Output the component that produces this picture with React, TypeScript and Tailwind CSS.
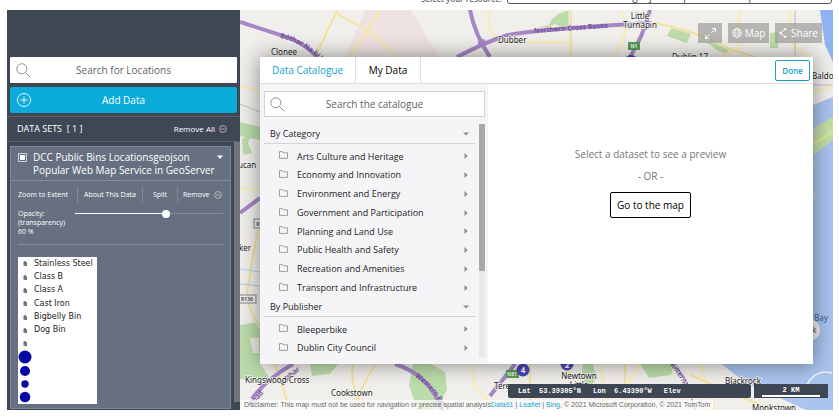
import React from "react";

const categories = [
  "Arts Culture and Heritage",
  "Economy and Innovation",
  "Environment and Energy",
  "Government and Participation",
  "Planning and Land Use",
  "Public Health and Safety",
  "Recreation and Amenities",
  "Transport and Infrastructure",
];
const publishers = ["Bleeperbike", "Dublin City Council"];
const binTypes = ["Stainless Steel", "Class B", "Class A", "Cast Iron", "Bigbelly Bin", "Dog Bin", ""];
const dotRadii = [6.5, 5, 3.7, 5.3];

function SearchIcon() {
  return (
    <svg viewBox="0 0 14 14" className="pointer-events-none absolute left-[6px] top-[6px] size-[15px]" fill="none" stroke="#8b8b8b" strokeWidth="0.9" aria-hidden="true">
      <circle cx="5.4" cy="5.4" r="4.7" />
      <path d="M8.9 8.9 L13.4 13.4" />
    </svg>
  );
}

function MinusCircle() {
  return (
    <svg viewBox="0 0 8 8" className="size-2" fill="none" stroke="#c3c7ce" strokeWidth="0.8" aria-hidden="true">
      <circle cx="4" cy="4" r="3.4" />
      <path d="M2 4 H6" />
    </svg>
  );
}

function SearchBox({ label, bordered }: { label: string; bordered?: boolean }) {
  return (
    <div className="relative">
      <SearchIcon />
      <input
        type="text"
        aria-label={label}
        placeholder={label}
        className={
          "block h-[26px] w-full bg-white px-8 text-center text-[10px] placeholder:text-[#5f5f5f] outline-none " +
          (bordered ? "border border-[#d3d3d6]" : "rounded-[1px]")
        }
      />
    </div>
  );
}

function Header() {
  return (
    <header className="flex h-[10px] items-end justify-end overflow-hidden pr-[7px] pb-[6px]">
      <label htmlFor="resource" className="mr-[5px] text-[8px] leading-[10px] font-semibold text-[#666]">
        Select your resource:
      </label>
      <select
        id="resource"
        className="h-4 w-[325px] shrink-0 appearance-none rounded-[3px] border border-[#555] bg-white px-1 text-[10px] text-[#444] outline-none"
      >
        <option>DCC Public Bins Locationsgeojson Popular Web Map</option>
      </select>
    </header>
  );
}

function BinIcon() {
  return (
    <svg viewBox="0 0 14 13" className="h-[13px] w-[14px]" aria-hidden="true">
      <path d="M5.2 5.4 L6.4 4.2 H8 V5.4 H9 V9 H5.6 V6.4 Z" fill="#666" />
      <path d="M6.6 6.6 V8.6 M7.8 6.6 V8.6" stroke="#aaa" strokeWidth="0.5" />
    </svg>
  );
}

function Legend() {
  return (
    <ul className="mt-3 mb-1 grid h-[147px] w-[79px] auto-rows-fr overflow-hidden bg-white font-['DejaVu_Sans'] text-[8px] whitespace-nowrap text-[#222]">
      {binTypes.map((name, i) => (
        <li key={i} className="flex items-center gap-[2px]">
          <BinIcon />
          <span>{name}</span>
        </li>
      ))}
      {dotRadii.map((r, i) => (
        <li key={i} className="flex items-center">
          <svg viewBox="0 0 14 14" className="size-[14px] shrink-0" aria-hidden="true">
            <circle cx="7" cy="7" r={r} fill="#0707a3" />
          </svg>
        </li>
      ))}
    </ul>
  );
}

function Sidebar() {
  return (
    <aside className="flex w-[233px] shrink-0 flex-col bg-[#3f4755] text-white">
      <div className="flex flex-col gap-1 px-[3px] pt-[47px] pb-[3px]">
        <SearchBox label="Search for Locations" />
        <button type="button" className="relative h-[26px] w-full rounded-[2px] bg-[#0aabd9] text-[10px] font-medium">
          <svg viewBox="0 0 14 14" className="absolute left-[7px] top-[6px] size-[14px]" fill="none" stroke="white" strokeWidth="0.9" aria-hidden="true">
            <circle cx="7" cy="7" r="6.5" />
            <path d="M7 3.6 V10.4 M3.6 7 H10.4" />
          </svg>
          Add Data
        </button>
      </div>
      <div className="flex h-[26px] items-center justify-between border-y border-t-[#596170] border-b-[#596170] pr-[13px] pl-[10px]">
        <h2 className="text-[9px] font-medium whitespace-pre">DATA SETS  [ 1 ]</h2>
        <button type="button" className="flex items-center gap-1 text-[8px] font-medium">
          Remove All <MinusCircle />
        </button>
      </div>
      <div className="flex grow">
        <div className="flex grow px-[3px] pt-1 pb-px">
          <article className="grow border border-[#7d8697] bg-[#677080]">
            <div className="flex h-[34px] items-start border-b border-[#858e9d] pt-1 pr-[7px] pl-[7px]">
              <input
                id="layer"
                type="checkbox"
                defaultChecked
                className="mt-[2px] mr-[6px] size-[9px] shrink-0 appearance-none border border-[#cfd3d9] bg-white outline-1 -outline-offset-2 outline-[#677080]"
              />
              <label htmlFor="layer" className="grow text-[10px] leading-[13px]">
                DCC Public Bins Locationsgeojson
                <br />
                Popular Web Map Service in GeoServer
              </label>
              <svg viewBox="0 0 6 4" className="mt-1 h-1 w-[6px] shrink-0" aria-hidden="true">
                <path d="M0 0.5 H6 L3 4 Z" fill="white" />
              </svg>
            </div>
            <div className="px-[7px]">
              <div className="mt-[6px] flex h-4 items-center text-[7px] font-medium whitespace-nowrap">
                <button type="button" className="h-full w-[60px] border-r border-[#828b9a] text-left">Zoom to Extent</button>
                <button type="button" className="h-full w-[65px] border-r border-[#828b9a]">About This Data</button>
                <button type="button" className="h-full w-[35px] border-r border-[#828b9a]">Split</button>
                <button type="button" className="flex h-full items-center gap-[5px] pl-[5px]">
                  Remove <MinusCircle />
                </button>
              </div>
              <div className="mt-[6px] flex items-start justify-between border-b border-[#858e9d] pb-2">
                <label htmlFor="opacity" className="text-[7px] leading-[9px] font-medium">
                  Opacity:
                  <br />
                  (transparency)
                  <br />
                  60 %
                </label>
                <input
                  id="opacity"
                  type="range"
                  defaultValue={62}
                  className="mt-[4px] h-px w-[148px] appearance-none bg-linear-to-r from-white from-60% to-[#858e9d] to-60% outline-none [&::-webkit-slider-thumb]:size-2 [&::-webkit-slider-thumb]:appearance-none [&::-webkit-slider-thumb]:rounded-full [&::-webkit-slider-thumb]:bg-white"
                />
              </div>
              <Legend />
            </div>
          </article>
        </div>
        <div className="mb-2 w-[6px] shrink-0 bg-[#737478]" />
      </div>
    </aside>
  );
}

function MapCanvas() {
  return (
    <svg viewBox="240 10 593 400" preserveAspectRatio="xMinYMin slice" className="absolute inset-0 size-full font-['Noto_Sans']" fill="none" role="img" aria-label="Map of Dublin">
      <rect x="240" y="10" width="593" height="400" fill="#f1efeb" />
      <path d="M365 10 H410 L440 57 H345 Z" fill="#efe3e2" />
      <g fill="#bcdcab">
        <path d="M539 27 l10-2 3-6 8-6 9-3 v16 l-8 1 -6-3 -9 4 z" />
        <path d="M672 27 l19 6 -4 10 -20-7z M706 42 l18 3 8 10 -14-4z M770 33 l8-1 v16 h-8z" />
        <path d="M242 139 l9-5 -3 9 4 10 -9 2z M240 122 l20 5 v13 l-20-4z" />
        <path d="M240 325 l20-3 v42 l14 20 -34-5z M310 364 h28 l-8 10 -18 2z M413 364 h18 l14 8 2 18 -12 20 h-18l-8-25z" />
        <path d="M583 364 h10 l3 15 -6 8 h-10z M640 364 h34 l-3 11 -22 3z" />
      </g>
      <path d="M250 338 h9 v15 h-6z" fill="#eef0e8" />
      <path d="M820 10 H833 V62 L825 45 Z" fill="#8fb3f0" />
      <path d="M813 105 L833 97 V410 H806 Q785 400 760 389 Q742 382 722 364 H813 Z" fill="#a9c4ef" />
      <path d="M813 128 L833 117 V140 L813 155 Z" fill="#c3dfa6" />
      <path d="M813 144 L833 132" stroke="#d8e69c" strokeWidth="3" />
      <path d="M806 386 q10-18 26-13" stroke="#edf0f5" strokeWidth="1.5" />
      <g stroke="#f7edc3" strokeWidth="3">
        <path d="M337 11 L315 57 M337 14 L369 31 L397 56 M381 10 L350 57 M489 10 V30 L502 42 H568 M570 10 V57" />
        <path d="M622 12 q10 24-10 45 M655 23 q45 9 75 26 l40 13 M742 10 q-8 18-3 39 l-20 8 M790 10 l-2 30 20 17" />
        <path d="M258 230 q-6 30-10 57 q-5 15 15 45 l12 32 15 46 M240 86 l20 6 M240 189 h20 M813 92 l20-5" />
        <path d="M353 364 q-5 20 12 46 M375 364 l-25 46 M476 364 q-12 20 22 46 M530 364 v46 M568 364 l5 46 M600 364 l8 46 M625 364 v46 M700 364 l15 46 M690 375 l75 32 M640 364 l-15 25" />
      </g>
      <g stroke="#e9d48b" strokeWidth="0.8">
        <path d="M337 11 L315 57 M337 14 L369 31 L397 56 M381 10 L350 57 M571 10 V57 M655 23 q45 9 75 26 l40 13" />
        <path d="M258 230 q-6 30-10 57 q-5 15 15 45 l12 32 15 46 M353 364 q-5 20 12 46 M375 364 l-25 46 M530 364 v46 M625 364 v46 M690 375 l75 32" />
      </g>
      <path d="M240 269 l20 3 M240 284 l20 2" stroke="#a5c5ea" strokeWidth="0.8" />
      <path d="M240 104 l20 8 M795 10 v47 M813 85 h20" stroke="#aaa" strokeWidth="0.7" />
      <g stroke="#a587c5" strokeWidth="4">
        <path d="M240 22 L290 38 Q306 45 317 57 M470 10 Q475 35 490 57 M457 57 Q490 40 508 35 Q540 29 650 23 M650 10 Q643 37 630 57" />
        <path d="M240 213 L260 198 M293 364 Q265 380 252 399 M395 364 Q430 375 442 410 M515 364 L490 396" />
      </g>
      <circle cx="482" cy="43" r="4" fill="#a587c5" />
      <path d="M671 364 q12 8 17 21 l7 25" stroke="#8c789b" strokeWidth="1.5" strokeDasharray="2 1" />
      <defs>
        <path id="bothar" d="M280 38 Q303 42 324 64" />
        <path id="bothar2" d="M283 386 Q295 372 310 364" />
        <path id="western" d="M415 377 Q432 388 443 408" />
        <path id="kilt" d="M670 365 Q682 378 690 400" />
      </defs>
      <g fontSize="7" fill="#714b99" fontWeight="600">
        <text transform="rotate(-4 534 33)" x="534" y="33">Northern Cross Route</text>
        <text><textPath href="#bothar">Bóthar Na hUamh</textPath></text>
        <text><textPath href="#bothar2">Bóthar</textPath></text>
        <text><textPath href="#western">Western Parkway</textPath></text>
        <text><textPath href="#kilt">Kilternan</textPath></text>
        <text transform="rotate(-48 252 406)" x="252" y="406">Road</text>
      </g>
      <g fontSize="8" fill="#222" stroke="#f7f6f3" strokeWidth="1.5" paintOrder="stroke">
        <text x="271" y="55">Clonee</text>
        <text x="498" y="43">Dubber</text>
        <text x="640" y="19" textAnchor="middle">Little</text>
        <text x="640" y="28" textAnchor="middle">Turnapin</text>
        <text x="672" y="60">Dublin 17</text>
        <text x="812" y="79">Baldoyle</text>
        <text x="237" y="47">t</text>
        <text x="238" y="168">ucan</text>
        <text x="239" y="251">ker</text>
        <text x="245" y="383">Kingswood Cross</text>
        <text x="331" y="396">Cookstown</text>
        <text x="494" y="389">Terenure</text>
        <text x="579" y="379" textAnchor="middle"><tspan x="579">Newtown</tspan><tspan x="579" dy="9">Little</tspan></text>
        <text x="725" y="384">Blackrock</text>
        <text x="752" y="411">Monkstown</text>
      </g>
      <text x="814" y="321" fontSize="8" fill="#3b5a8f">Bay</text>
      <g fontSize="5" fontWeight="700" textAnchor="middle">
        <rect x="628" y="42" width="12" height="8" fill="#579b55" />
        <text x="634" y="48" fill="#e9f4e4">N1</text>
        <rect x="506" y="370" width="13" height="8" fill="#579b55" />
        <text x="512" y="376" fill="#e9f4e4">N81</text>
        <rect x="239" y="295" width="17" height="8" fill="#eee" stroke="#888" />
        <text x="247" y="301" fill="#555">R136</text>
        <rect x="254" y="219" width="17" height="9" fill="#eee" stroke="#888" />
        <text x="258" y="226" fill="#555">R</text>
      </g>
      <g fill="#4b46b5">
        <circle cx="631" cy="62" r="7" />
        <circle cx="523" cy="370" r="6.5" />
        <circle cx="567" cy="364" r="6.5" />
      </g>
      <text x="523" y="373" fontSize="8" fontWeight="700" fill="white" textAnchor="middle">4</text>
      <text x="567" y="368" fontSize="8" fontWeight="700" fill="white" textAnchor="middle">2</text>
      <g fill="#c9d1df" fillOpacity="0.6">
        <circle cx="809" cy="133" r="7" />
        <circle cx="809" cy="165" r="7" />
        <circle cx="809" cy="195" r="7" />
      </g>
      <circle cx="809" cy="330" r="11" fill="#f1f1f1" />
      <text x="812" y="333" fontSize="8" fill="#444">k</text>
    </svg>
  );
}

function MapTools() {
  return (
    <div className="absolute top-[13px] right-[11px] flex h-5 gap-[6px] text-[10px] font-medium text-white">
      <button type="button" aria-label="Full screen" className="flex w-6 items-center justify-center bg-[#9c9c9c]/70">
        <svg viewBox="0 0 10 10" className="size-[11px]" fill="none" stroke="white" strokeWidth="0.9" aria-hidden="true">
          <path d="M6.5 0.5 H9.5 V3.5 M9.5 0.5 L5.8 4.2 M3.5 9.5 H0.5 V6.5 M0.5 9.5 L4.2 5.8" />
        </svg>
      </button>
      <button type="button" className="flex w-[41px] items-center justify-center gap-[3px] bg-[#9c9c9c]/70">
        <svg viewBox="0 0 10 10" className="size-[10px]" fill="none" stroke="white" strokeWidth="0.7" aria-hidden="true">
          <circle cx="5" cy="5" r="4.5" />
          <ellipse cx="5" cy="5" rx="2.2" ry="4.5" />
          <path d="M0.5 5 H9.5 M1.2 2.7 H8.8 M1.2 7.3 H8.8" />
        </svg>
        Map
      </button>
      <button type="button" className="flex w-[47px] items-center justify-center gap-1 bg-[#9c9c9c]/70">
        <svg viewBox="0 0 8 10" className="h-[10px] w-2" fill="none" stroke="white" strokeWidth="0.9" aria-hidden="true">
          <path d="M6 1.2 L1.6 5 L6 8.8" />
          <circle cx="6.2" cy="1.2" r="0.8" fill="white" />
          <circle cx="1.4" cy="5" r="0.8" fill="white" />
          <circle cx="6.2" cy="8.8" r="0.8" fill="white" />
        </svg>
        Share
      </button>
    </div>
  );
}

function MapFooter() {
  return (
    <footer className="absolute inset-x-0 bottom-0">
      <div className="mr-[5px] flex h-[14px] justify-end gap-[3px] font-['Liberation_Mono'] text-[7px] font-bold text-white">
        <div className="flex w-[243px] items-center gap-3 rounded-[2px] bg-[#3f4755] pl-[10px] whitespace-pre">
          <span>Lat  53.39305°N</span>
          <span>Lon  6.43390°W</span>
          <span>Elev</span>
        </div>
        <div className="w-[74px] bg-[#3f4755] px-2 text-center">
          <div className="mt-[2px] border-b-2 border-white leading-[9px]">2 KM</div>
        </div>
      </div>
      <p className="mt-[2px] flex h-[10px] w-fit items-center bg-white/70 pr-[3px] pl-1 font-['Liberation_Sans'] text-[7px] whitespace-pre text-[#666]">
        Disclaimer: This map must not be used for navigation or precise spatial analysis
        <a href="#data61" className="text-[#20a5cf]">Data61</a> | <a href="#leaflet" className="text-[#20a5cf]">Leaflet</a> |{" "}
        <a href="#bing" className="text-[#20a5cf]">Bing</a>, © 2021 Microsoft Corporation, © 2021 TomTom
      </p>
    </footer>
  );
}

function SectionHeader({ title }: { title: string }) {
  return (
    <button type="button" className="flex h-5 w-full items-center justify-between border-b border-[#d4d4d8] px-[6px]">
      {title}
      <svg viewBox="0 0 6 4" className="h-1 w-[6px]" aria-hidden="true">
        <path d="M0 0.5 H6 L3 3.5 Z" fill="#8c8c8c" />
      </svg>
    </button>
  );
}

function FolderRow({ name }: { name: string }) {
  return (
    <li className="flex">
      <button type="button" className="flex w-full items-center pr-[7px] pl-[15px] text-left">
        <svg viewBox="0 0 9 8" className="mr-[9px] mb-[2px] h-2 w-[9px]" fill="none" stroke="#8a8a8a" strokeWidth="0.8" aria-hidden="true">
          <path d="M0.5 7.4 V0.6 H3.4 L4.2 1.8 H8.5 V7.4 Z" />
        </svg>
        <span className="grow">{name}</span>
        <svg viewBox="0 0 4 6" className="h-[6px] w-1" aria-hidden="true">
          <path d="M0.5 0 L3.7 3 L0.5 6 Z" fill="#8c8c8c" />
        </svg>
      </button>
    </li>
  );
}

function CatalogueDialog() {
  return (
    <section role="dialog" aria-label="Data Catalogue" className="absolute inset-x-5 top-[47px] bg-white text-[10px] text-[#222] shadow-[0_0_20px_rgba(0,0,0,0.45)]">
      <div className="flex h-[27px] items-stretch border-b border-[#dcdcdf]">
        <button type="button" className="w-24 border-r border-[#dcdcdf] text-[#149fcb]">Data Catalogue</button>
        <button type="button" className="w-[65px] border-r border-[#dcdcdf] text-black">My Data</button>
        <button type="button" className="mt-[3px] mr-[3px] ml-auto h-[21px] w-[35px] rounded-[2px] border border-[#149fcb] text-[8px] font-semibold text-[#149fcb]">
          Done
        </button>
      </div>
      <div className="flex">
        <div className="w-[228px] shrink-0 bg-[#f5f5f8] pt-[7px] pr-[3px] pb-[7px] pl-1">
          <SearchBox label="Search the catalogue" bordered />
          <div className="mt-[7px] flex text-[9px]">
            <div className="mr-1 grow">
              <SectionHeader title="By Category" />
              <ul className="mt-[3px] grid h-[150px] auto-rows-fr">
                {categories.map((name) => (
                  <FolderRow key={name} name={name} />
                ))}
              </ul>
              <SectionHeader title="By Publisher" />
              <ul className="mt-[3px] grid h-[37px] auto-rows-fr">
                {publishers.map((name) => (
                  <FolderRow key={name} name={name} />
                ))}
              </ul>
            </div>
            <div className="w-[6px] bg-[#e8e8eb]">
              <div className="h-[147px] bg-[#a9a9ab]" />
            </div>
          </div>
        </div>
        <div className="flex grow flex-col items-center pt-[63px] text-[#777]">
          <p className="leading-[14px]">Select a dataset to see a preview</p>
          <p className="mt-2 leading-[14px]">- OR -</p>
          <button type="button" className="mt-[9px] h-[26px] w-[81px] rounded-[2px] border border-black text-black">
            Go to the map
          </button>
        </div>
      </div>
    </section>
  );
}

export default function App() {
  return (
    <div className="bg-white font-['Open_Sans','Noto_Sans',sans-serif]">
      <Header />
      <main className="mr-[6px] ml-[7px] flex overflow-hidden">
        <Sidebar />
        <div className="relative grow overflow-hidden">
          <MapCanvas />
          <MapTools />
          <MapFooter />
          <CatalogueDialog />
        </div>
      </main>
    </div>
  );
}
